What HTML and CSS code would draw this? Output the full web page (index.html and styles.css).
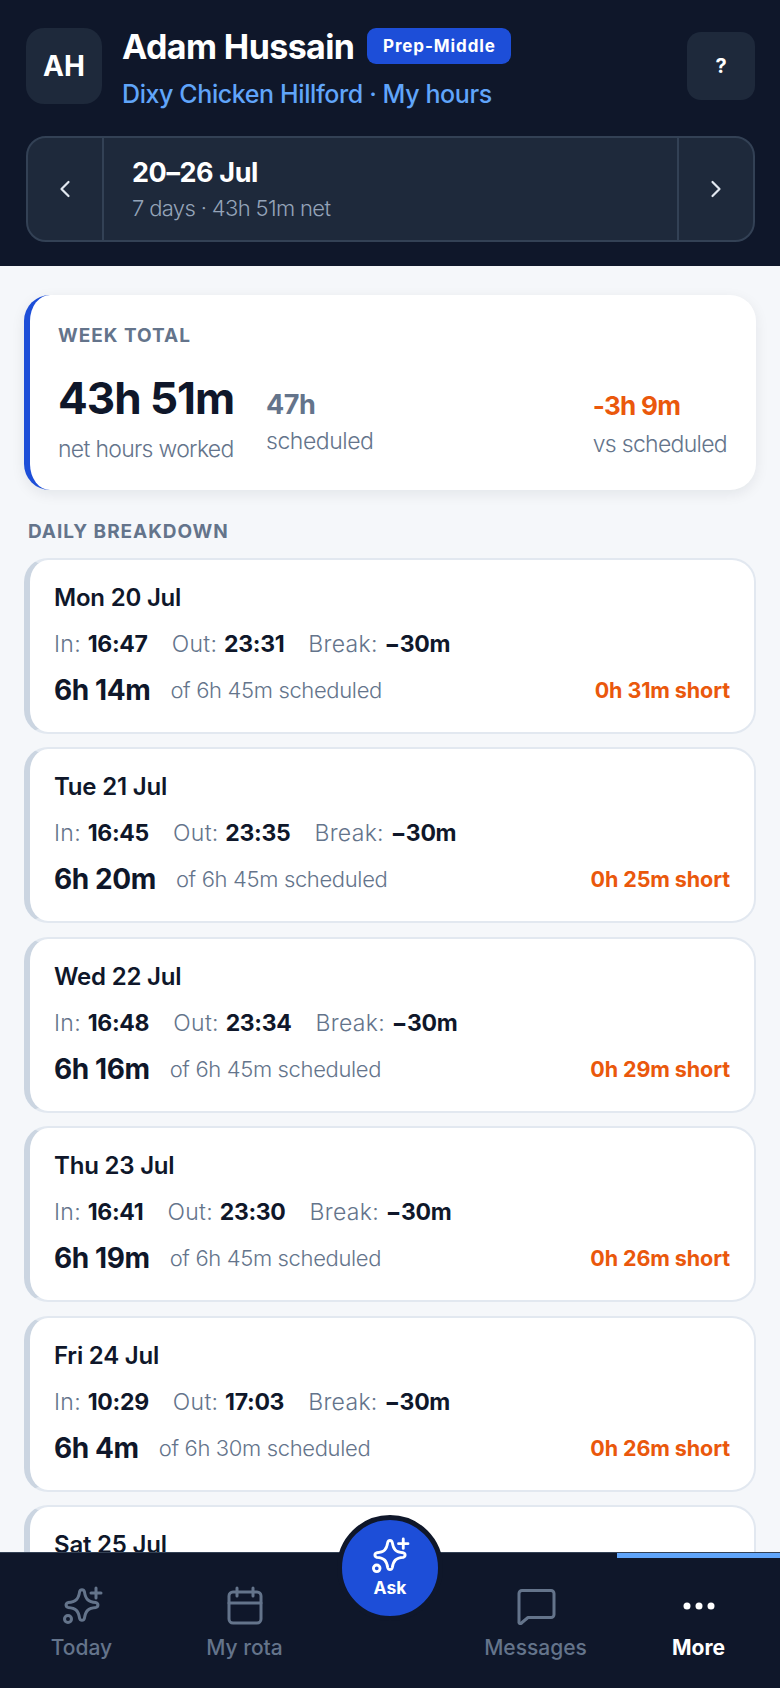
FILE: index.html
```html
<!DOCTYPE html>
<html lang="en">
<head>
    <meta charset="UTF-8">
    <meta name="viewport" content="width=device-width, initial-scale=1.0">
    <title>My hours</title>
    <link rel="stylesheet" href="styles.css">
</head>
<body>
<div class="app">
    <header class="top">
        <div class="top-row">
            <div class="avatar">AH</div>
            <div class="who">
                <div class="name-row">
                    <span class="name">Adam Hussain</span>
                    <span class="badge">Prep-Middle</span>
                </div>
                <div class="site">Dixy Chicken Hillford · My hours</div>
            </div>
            <div class="help">?</div>
        </div>
        <div class="week-nav">
            <div class="arrow">
                <svg width="14" height="20" viewBox="0 0 14 20"><path d="M10.5 3 3.5 10l7 7"/></svg>
            </div>
            <div class="week-mid">
                <div class="week-range">20–26 Jul</div>
                <div class="week-sub">7 days · 43h 51m net</div>
            </div>
            <div class="arrow arrow-right">
                <svg width="14" height="20" viewBox="0 0 14 20"><path d="M3.5 3l7 7-7 7"/></svg>
            </div>
        </div>
    </header>

    <main class="content">
        <section class="total-card">
            <div class="total-label">WEEK TOTAL</div>
            <div class="total-row">
                <div class="total-net">
                    <div class="net-value">43h 51m</div>
                    <div class="net-label">net hours worked</div>
                </div>
                <div class="total-sched">
                    <div class="sched-value">47h</div>
                    <div class="sched-label">scheduled</div>
                </div>
                <div class="total-diff">
                    <div class="diff-value">-3h 9m</div>
                    <div class="diff-label">vs scheduled</div>
                </div>
            </div>
        </section>

        <h2 class="section-title">DAILY BREAKDOWN</h2>

        <article class="day-card">
            <div class="day-name">Mon 20 Jul</div>
            <div class="times">
                <span>In: <b>16:47</b></span><span>Out: <b>23:31</b></span><span>Break: <b>−30m</b></span>
            </div>
            <div class="day-foot">
                <span class="worked">6h 14m</span><span class="of">of 6h 45m scheduled</span><span class="short">0h 31m short</span>
            </div>
        </article>
        <article class="day-card">
            <div class="day-name">Tue 21 Jul</div>
            <div class="times">
                <span>In: <b>16:45</b></span><span>Out: <b>23:35</b></span><span>Break: <b>−30m</b></span>
            </div>
            <div class="day-foot">
                <span class="worked">6h 20m</span><span class="of">of 6h 45m scheduled</span><span class="short">0h 25m short</span>
            </div>
        </article>
        <article class="day-card">
            <div class="day-name">Wed 22 Jul</div>
            <div class="times">
                <span>In: <b>16:48</b></span><span>Out: <b>23:34</b></span><span>Break: <b>−30m</b></span>
            </div>
            <div class="day-foot">
                <span class="worked">6h 16m</span><span class="of">of 6h 45m scheduled</span><span class="short">0h 29m short</span>
            </div>
        </article>
        <article class="day-card">
            <div class="day-name">Thu 23 Jul</div>
            <div class="times">
                <span>In: <b>16:41</b></span><span>Out: <b>23:30</b></span><span>Break: <b>−30m</b></span>
            </div>
            <div class="day-foot">
                <span class="worked">6h 19m</span><span class="of">of 6h 45m scheduled</span><span class="short">0h 26m short</span>
            </div>
        </article>
        <article class="day-card">
            <div class="day-name">Fri 24 Jul</div>
            <div class="times">
                <span>In: <b>10:29</b></span><span>Out: <b>17:03</b></span><span>Break: <b>−30m</b></span>
            </div>
            <div class="day-foot">
                <span class="worked">6h 4m</span><span class="of">of 6h 30m scheduled</span><span class="short">0h 26m short</span>
            </div>
        </article>
        <article class="day-card">
            <div class="day-name">Sat 25 Jul</div>
        </article>
    </main>

    <nav class="tabs">
        <div class="tab">
            <svg class="tab-icon" viewBox="0 0 38 38">
                <path d="M16.6 4.6c.7-2.6 4.1-2.6 4.800 0C22.500 12 25 15 33 15.600c2.600.8 2.600 4 0 4.800C25 21 22.500 24 21.400 31.400c-.7 2.600-4.100 2.600-4.800 0C15.500 24 13 21 5 20.400c-2.600-.8-2.600-4 0-4.800C13 15 15.500 12 16.600 4.600Z"/>
                <path d="M33 1v10M28 6h10"/>
                <circle cx="5" cy="32" r="3.500"/>
            </svg>
            <span>Today</span>
        </div>
        <div class="tab">
            <svg class="tab-icon" viewBox="0 0 38 38">
                <rect x="3" y="5" width="32" height="31" rx="4"/>
                <path d="M3 16h32M11 1v8M27 1v8"/>
            </svg>
            <span>My rota</span>
        </div>
        <div class="tab-gap"></div>
        <div class="tab">
            <svg class="tab-icon" viewBox="0 0 38 38">
                <path d="M5 3.500h29a3 3 0 0 1 3 3v21a3 3 0 0 1-3 3H11l-6 5a1.500 1.500 0 0 1-3-1V6.500a3 3 0 0 1 3-3Z"/>
            </svg>
            <span>Messages</span>
        </div>
        <div class="tab tab-active">
            <svg class="tab-icon" viewBox="0 0 38 38">
                <circle class="dot" cx="7" cy="19" r="3.500"/>
                <circle class="dot" cx="19" cy="19" r="3.500"/>
                <circle class="dot" cx="31" cy="19" r="3.500"/>
            </svg>
            <span>More</span>
        </div>
        <div class="ask">
            <svg class="ask-icon" viewBox="0 0 38 38">
                <path d="M16.6 4.6c.7-2.6 4.1-2.6 4.800 0C22.500 12 25 15 33 15.600c2.600.8 2.600 4 0 4.800C25 21 22.500 24 21.400 31.400c-.7 2.600-4.100 2.600-4.800 0C15.500 24 13 21 5 20.400c-2.600-.8-2.600-4 0-4.800C13 15 15.500 12 16.600 4.600Z"/>
                <path d="M33 1v10M28 6h10"/>
                <circle cx="5" cy="32" r="3.500"/>
            </svg>
            <span>Ask</span>
        </div>
    </nav>
</div>
</body>
</html>
```

FILE: styles.css
```css
* {
    box-sizing: border-box;
}

body {
    margin: 0;
    font-family: Inter, "Liberation Sans", sans-serif;
    background: #f5f7fa;
    color: #0f172a;
}

.app {
    height: 1688px;
    display: flex;
    flex-direction: column;
    overflow: hidden;
}

/* header */
.top {
    height: 266px;
    flex: none;
    background: #0f172a;
    padding: 28px 25px 0 26px;
}

.top-row {
    display: flex;
    align-items: flex-start;
    height: 108px;
}

.avatar {
    width: 76px;
    height: 76px;
    border-radius: 18px;
    background: #1e293b;
    color: #fff;
    font-size: 28px;
    font-weight: 700;
    display: flex;
    align-items: center;
    justify-content: center;
}

.who {
    flex: 1;
    margin-left: 20px;
}

.name-row {
    display: flex;
    align-items: center;
    height: 36px;
}

.name {
    font-size: 34px;
    font-weight: 700;
    letter-spacing: -0.6px;
    color: #fff;
}

.badge {
    margin-left: 13px;
    height: 36px;
    width: 144px;
    border-radius: 9px;
    background: #1d4ed8;
    color: #fff;
    font-size: 17px;
    font-weight: 700;
    letter-spacing: 0.9px;
    display: flex;
    align-items: center;
    justify-content: center;
}

.site {
    margin-top: 15px;
    font-size: 25px;
    font-weight: 500;
    letter-spacing: -0.4px;
    color: #60a5fa;
}

.help {
    width: 68px;
    height: 68px;
    margin-top: 4px;
    border-radius: 14px;
    background: #1e293b;
    color: #fff;
    font-size: 20px;
    font-weight: 700;
    display: flex;
    align-items: center;
    justify-content: center;
}

.week-nav {
    height: 106px;
    display: flex;
    background: #1e293b;
    border: 2px solid #334155;
    border-radius: 20px;
}

.arrow {
    width: 76px;
    flex: none;
    border-right: 2px solid #334155;
    display: flex;
    align-items: center;
    justify-content: center;
}

.arrow-right {
    border-right: none;
    border-left: 2px solid #334155;
}

.arrow path {
    fill: none;
    stroke: #e2e8f0;
    stroke-width: 2.200;
    stroke-linecap: round;
    stroke-linejoin: round;
}

.week-mid {
    flex: 1;
    padding: 18px 0 0 28px;
}

.week-range {
    font-size: 27px;
    font-weight: 700;
    letter-spacing: -0.4px;
    color: #fff;
}

.week-sub {
    margin-top: 6px;
    font-size: 22px;
    font-weight: 300;
    letter-spacing: -0.65px;
    color: #94a3b8;
}

/* main scroll area */
.content {
    flex: 1;
    min-height: 0;
    overflow: hidden;
    padding: 29px 24px 0;
}

.total-card {
    height: 195px;
    background: #fff;
    border-left: 6px solid #1d4ed8;
    border-radius: 26px;
    box-shadow: 0 4px 14px rgba(15, 23, 42, 0.08);
    padding: 29px 29px 0 28px;
}

.total-label {
    font-size: 19px;
    font-weight: 700;
    letter-spacing: 1px;
    color: #64748b;
}

.total-row {
    display: flex;
    margin-top: 25px;
}

.total-net {
    width: 208px;
}

.net-value {
    font-size: 44px;
    font-weight: 700;
    letter-spacing: -1px;
    line-height: 52px;
}

.net-label,
.sched-label,
.diff-label {
    font-size: 23px;
    font-weight: 300;
    letter-spacing: -0.7px;
    color: #64748b;
}

.net-label {
    margin-top: 11px;
}

.total-sched {
    flex: 1;
    padding-top: 16px;
}

.sched-value,
.diff-value {
    font-size: 27px;
    font-weight: 700;
    letter-spacing: -0.5px;
    line-height: 34px;
}

.sched-value {
    color: #64748b;
}

.sched-label {
    margin-top: 5px;
    letter-spacing: -0.45px;
}

.total-diff {
    padding-top: 17px;
}

.diff-value {
    font-size: 26px;
    letter-spacing: -0.7px;
    color: #ea580c;
}

.diff-label {
    margin-top: 7px;
}

.section-title {
    margin: 30px 0 14.500px 4px;
    font-size: 19px;
    font-weight: 700;
    letter-spacing: 0.95px;
    line-height: 23px;
    color: #64748b;
}

.day-card {
    height: 176px;
    margin-bottom: 13.500px;
    background: #fff;
    border: 2px solid #e2e8f0;
    border-left: 6px solid #cbd5e1;
    border-radius: 24px;
    padding: 22px 24px 0 24px;
}

.day-name {
    font-size: 24px;
    font-weight: 600;
    letter-spacing: -0.2px;
    line-height: 32px;
}

.times {
    display: flex;
    gap: 24px;
    margin-top: 14px;
    font-size: 23px;
    font-weight: 300;
    letter-spacing: 0.3px;
    line-height: 32px;
    color: #64748b;
}

.times b {
    font-weight: 700;
    letter-spacing: -0.3px;
    color: #0f172a;
}

.day-foot {
    display: flex;
    align-items: center;
    margin-top: 14px;
    height: 32px;
}

.worked {
    font-size: 28px;
    font-weight: 700;
    letter-spacing: -0.4px;
}

.of {
    margin-left: 20px;
    font-size: 22px;
    font-weight: 300;
    letter-spacing: -0.35px;
    color: #64748b;
}

.short {
    margin-left: auto;
    font-size: 21.500px;
    font-weight: 700;
    letter-spacing: -0.1px;
    color: #ea580c;
}

/* bottom nav */
.tabs {
    position: relative;
    height: 136px;
    flex: none;
    display: flex;
    background: #0f172a;
    border-top: 1px solid #334155;
}

.tab {
    width: 163px;
    padding-top: 34px;
    display: flex;
    flex-direction: column;
    align-items: center;
    gap: 10px;
    font-size: 21px;
    font-weight: 500;
    color: #64748b;
}

.tab-gap {
    width: 128px;
}

.tab-icon {
    width: 38px;
    height: 38px;
    overflow: visible;
    fill: none;
    stroke: #64748b;
    stroke-width: 3;
    stroke-linecap: round;
    stroke-linejoin: round;
}

.tab-active {
    padding-top: 29px;
    border-top: 5px solid #60a5fa;
    color: #fff;
    font-weight: 700;
}

.tab-active .dot {
    fill: #fff;
    stroke: none;
}

.ask {
    position: absolute;
    left: 337px;
    top: -38px;
    width: 106px;
    height: 106px;
    border: 5px solid #0f172a;
    border-radius: 50%;
    background: #1d4ed8;
    color: #fff;
    font-size: 17.500px;
    font-weight: 700;
    display: flex;
    flex-direction: column;
    align-items: center;
    padding-top: 18px;
    gap: 3px;
}

.ask-icon {
    width: 36px;
    height: 36px;
    overflow: visible;
    fill: none;
    stroke: #fff;
    stroke-width: 3;
    stroke-linecap: round;
    stroke-linejoin: round;
}
```
